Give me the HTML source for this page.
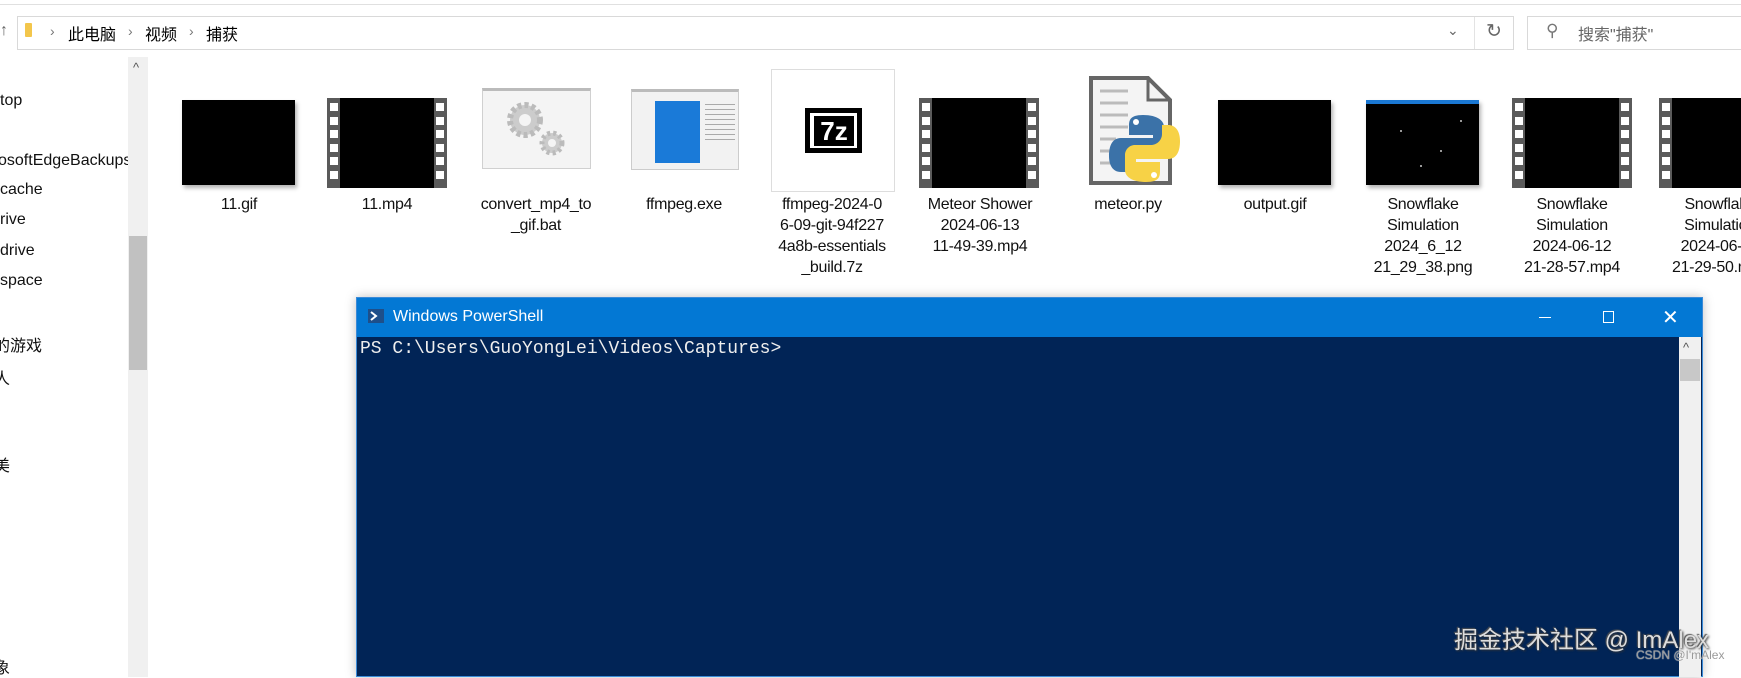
<!DOCTYPE html>
<html><head><meta charset="utf-8"><style>
*{margin:0;padding:0;box-sizing:border-box}
body{width:1741px;height:669px;overflow:hidden;background:#fff;position:relative;font-family:"Liberation Sans","Noto Sans CJK SC",sans-serif;color:#000}
.a{position:absolute}
.lbl{position:absolute;width:140px;text-align:center;font-size:16px;line-height:21px;color:#111;letter-spacing:-0.3px}
.nav{position:absolute;left:0;font-size:16px;color:#111}
.film{position:absolute;background:#5a5a5a}
.film .in{position:absolute;left:13px;right:13px;top:0;bottom:0;background:#000}
.film .h{position:absolute;width:8px;height:8px;background:#fff}
.blk{position:absolute;background:#000;box-shadow:2px 3px 4px rgba(0,0,0,.3)}
.dot{position:absolute;width:2px;height:2px;background:#999}
</style></head><body>
<div class="a" style="left:0;top:4px;width:1741px;height:1px;background:#e0e0e0"></div>
<!-- address bar -->
<div class="a" style="left:17px;top:16px;width:1497px;height:34px;border:1px solid #d9d9d9"></div>
<div class="a" style="left:0;top:22px;font-size:16px;color:#666">↑</div>
<div class="a" style="left:25px;top:23px;width:7px;height:14px;background:#f3c64b;border-radius:1px"></div>
<div class="a" style="left:50px;top:23px;font-size:14px;color:#777">›</div>
<div class="a" style="left:68px;top:21px;font-size:16px">此电脑</div>
<div class="a" style="left:128px;top:23px;font-size:14px;color:#777">›</div>
<div class="a" style="left:145px;top:21px;font-size:16px">视频</div>
<div class="a" style="left:189px;top:23px;font-size:14px;color:#777">›</div>
<div class="a" style="left:206px;top:21px;font-size:16px">捕获</div>
<div class="a" style="left:1447px;top:22px;font-size:14px;color:#666">⌄</div>
<div class="a" style="left:1474px;top:17px;width:1px;height:32px;background:#e3e3e3"></div>
<div class="a" style="left:1486px;top:20px;font-size:19px;color:#666">↻</div>
<div class="a" style="left:1527px;top:16px;width:220px;height:34px;border:1px solid #d9d9d9"></div>
<div class="a" style="left:1546px;top:21px;font-size:17px;color:#777;transform:scaleX(-1)">⚲</div>
<div class="a" style="left:1578px;top:21px;font-size:16px;color:#666">搜索"捕获"</div>
<!-- nav pane -->
<div class="nav" style="top:92px">top</div>
<div class="nav" style="top:152px;left:-2px">osoftEdgeBackups</div>
<div class="nav" style="top:181px">cache</div>
<div class="nav" style="top:211px">rive</div>
<div class="nav" style="top:242px">drive</div>
<div class="nav" style="top:272px">space</div>
<div class="nav" style="top:332px;left:-6px">的游戏</div>
<div class="nav" style="top:365px;left:-6px">人</div>
<div class="nav" style="top:452px;left:-6px">美</div>
<div class="nav" style="top:654px;left:-6px">象</div>
<div class="a" style="left:128px;top:57px;width:20px;height:620px;background:#f0f0f0"></div>
<div class="a" style="left:133px;top:60px;font-size:13px;color:#555">^</div>
<div class="a" style="left:129px;top:236px;width:18px;height:134px;background:#c1c1c1"></div>
<!-- items -->
<div class="blk" style="left:182px;top:100px;width:113px;height:85px"></div>
<div class="lbl" style="left:169px;top:194px">11.gif</div>

<div class="film" style="left:327px;top:98px;width:120px;height:90px"><div class="in"></div>
<div class="h" style="left:3px;top:5px"></div><div class="h" style="left:3px;top:19px"></div><div class="h" style="left:3px;top:32px"></div><div class="h" style="left:3px;top:46px"></div><div class="h" style="left:3px;top:59px"></div><div class="h" style="left:3px;top:73px"></div>
<div class="h" style="right:3px;top:5px"></div><div class="h" style="right:3px;top:19px"></div><div class="h" style="right:3px;top:32px"></div><div class="h" style="right:3px;top:46px"></div><div class="h" style="right:3px;top:59px"></div><div class="h" style="right:3px;top:73px"></div></div>
<div class="lbl" style="left:317px;top:194px">11.mp4</div>

<div class="a" style="left:482px;top:88px;width:109px;height:81px;background:#f4f4f4;border:1px solid #d0d0d0;border-top:3px solid #bbb"></div>
<svg class="a" style="left:500px;top:98px" width="70" height="65"><circle cx="25" cy="22" r="15" fill="#ccc" stroke="#bbb" stroke-width="6" stroke-dasharray="4 3"/><circle cx="25" cy="22" r="6" fill="#f4f4f4"/><circle cx="52" cy="45" r="10" fill="#ccc" stroke="#bbb" stroke-width="5" stroke-dasharray="3 3"/><circle cx="52" cy="45" r="4" fill="#f4f4f4"/></svg>
<div class="lbl" style="left:466px;top:194px">convert_mp4_to<br>_gif.bat</div>

<div class="a" style="left:631px;top:89px;width:108px;height:81px;background:#f2f2f2;border:1px solid #ccc;border-top:3px solid #bbb"></div>
<div class="a" style="left:655px;top:101px;width:45px;height:62px;background:#1a7ad8"></div>
<div class="a" style="left:705px;top:104px;width:30px;height:40px;background:repeating-linear-gradient(#aaa 0 1px,transparent 1px 5px)"></div>
<div class="lbl" style="left:614px;top:194px">ffmpeg.exe</div>

<div class="a" style="left:771px;top:69px;width:124px;height:123px;border:1px solid #ddd;background:#fff"></div>
<div class="a" style="left:805px;top:108px;width:57px;height:45px;background:#000"></div>
<div class="a" style="left:810px;top:113px;width:47px;height:35px;background:#fff"></div>
<div class="a" style="left:814px;top:116px;width:40px;height:30px;background:#000;color:#fff;font:bold 26px/30px 'Liberation Sans',sans-serif;text-align:center">7z</div>
<div class="lbl" style="left:762px;top:194px">ffmpeg-2024-0<br>6-09-git-94f227<br>4a8b-essentials<br>_build.7z</div>

<div class="film" style="left:919px;top:98px;width:120px;height:90px"><div class="in"></div>
<div class="h" style="left:3px;top:5px"></div><div class="h" style="left:3px;top:19px"></div><div class="h" style="left:3px;top:32px"></div><div class="h" style="left:3px;top:46px"></div><div class="h" style="left:3px;top:59px"></div><div class="h" style="left:3px;top:73px"></div>
<div class="h" style="right:3px;top:5px"></div><div class="h" style="right:3px;top:19px"></div><div class="h" style="right:3px;top:32px"></div><div class="h" style="right:3px;top:46px"></div><div class="h" style="right:3px;top:59px"></div><div class="h" style="right:3px;top:73px"></div></div>
<div class="lbl" style="left:910px;top:194px">Meteor Shower<br>2024-06-13<br>11-49-39.mp4</div>

<svg class="a" style="left:1088px;top:75px" width="100" height="112">
<path d="M3 3H60L82 25V108H3Z" fill="#f4f4f4" stroke="#666" stroke-width="4"/>
<path d="M60 3V25H82" fill="none" stroke="#666" stroke-width="3"/>
<g stroke="#bbb" stroke-width="3"><path d="M12 16H40M12 28H40M12 40H40M12 52H40M12 64H28M12 76H28M12 88H28"/></g>
<path d="M55 40c-14 0-14 6-14 12v8h24v3H33c-10 0-12 10-12 18s3 16 12 16h6V88c0-6 5-11 11-11h16c6 0 10-5 10-10V52c0-6-6-12-21-12z" fill="#3b72a8"/>
<path d="M58 107c14 0 14-6 14-12v-8H48v-3h32c10 0 12-10 12-18s-3-16-12-16h-6v9c0 6-5 11-11 11H47c-6 0-10 5-10 10v15c0 6 6 12 21 12z" fill="#f7d246"/>
<circle cx="48" cy="47" r="3" fill="#fff"/><circle cx="66" cy="100" r="3" fill="#fff"/></svg>
<div class="lbl" style="left:1058px;top:194px">meteor.py</div>

<div class="blk" style="left:1218px;top:100px;width:113px;height:85px"></div>
<div class="lbl" style="left:1205px;top:194px">output.gif</div>

<div class="blk" style="left:1366px;top:100px;width:113px;height:85px;border-top:4px solid #1a78d4"></div>
<div class="dot" style="left:1400px;top:130px"></div><div class="dot" style="left:1440px;top:150px"></div><div class="dot" style="left:1420px;top:165px"></div><div class="dot" style="left:1460px;top:120px"></div>
<div class="lbl" style="left:1353px;top:194px">Snowflake<br>Simulation<br>2024_6_12<br>21_29_38.png</div>

<div class="film" style="left:1512px;top:98px;width:120px;height:90px"><div class="in"></div>
<div class="h" style="left:3px;top:5px"></div><div class="h" style="left:3px;top:19px"></div><div class="h" style="left:3px;top:32px"></div><div class="h" style="left:3px;top:46px"></div><div class="h" style="left:3px;top:59px"></div><div class="h" style="left:3px;top:73px"></div>
<div class="h" style="right:3px;top:5px"></div><div class="h" style="right:3px;top:19px"></div><div class="h" style="right:3px;top:32px"></div><div class="h" style="right:3px;top:46px"></div><div class="h" style="right:3px;top:59px"></div><div class="h" style="right:3px;top:73px"></div></div>
<div class="lbl" style="left:1502px;top:194px">Snowflake<br>Simulation<br>2024-06-12<br>21-28-57.mp4</div>

<div class="film" style="left:1659px;top:98px;width:120px;height:90px"><div class="in"></div>
<div class="h" style="left:3px;top:5px"></div><div class="h" style="left:3px;top:19px"></div><div class="h" style="left:3px;top:32px"></div><div class="h" style="left:3px;top:46px"></div><div class="h" style="left:3px;top:59px"></div><div class="h" style="left:3px;top:73px"></div></div>
<div class="lbl" style="left:1650px;top:194px">Snowflake<br>Simulation<br>2024-06-12<br>21-29-50.mp4</div>

<!-- powershell -->
<div class="a" style="left:356px;top:297px;width:1347px;height:380px;background:#012456;border:1px solid #3a8ad8;box-shadow:0 0 10px rgba(0,0,0,.25)"></div>
<div class="a" style="left:357px;top:298px;width:1345px;height:39px;background:#0378d4"></div>
<svg class="a" style="left:368px;top:309px" width="16" height="14"><rect width="16" height="14" fill="#1e4f8a"/><path d="M3 3l5 4-5 4" stroke="#fff" stroke-width="2" fill="none"/></svg>
<div class="a" style="left:393px;top:308px;font-size:16px;color:#fff">Windows PowerShell</div>
<div class="a" style="left:1539px;top:317px;width:12px;height:1px;background:#fff"></div>
<div class="a" style="left:1603px;top:311px;width:11px;height:12px;border:1px solid #fff"></div>
<div class="a" style="left:1662px;top:305px;font-size:20px;color:#fff;font-weight:300">✕</div>
<div class="a" style="left:1679px;top:337px;width:22px;height:340px;background:#f0f0f0"></div>
<div class="a" style="left:1683px;top:340px;font-size:13px;color:#555">^</div>
<div class="a" style="left:1680px;top:359px;width:20px;height:22px;background:#c8c8c8"></div>
<div class="a" style="left:360px;top:338px;font:18px/22px 'Liberation Mono',monospace;color:#eee">PS C:\Users\GuoYongLei\Videos\Captures&gt;</div>
<div class="a" style="left:1454px;top:620px;font-size:24px;color:#ddd;text-shadow:1px 1px 2px #333,-1px -1px 1px #555">掘金技术社区 @ ImAlex</div>
<div class="a" style="left:1636px;top:648px;font-size:12px;color:#999;text-shadow:0 0 1px #fff">CSDN @I'mAlex</div>
</body></html>
